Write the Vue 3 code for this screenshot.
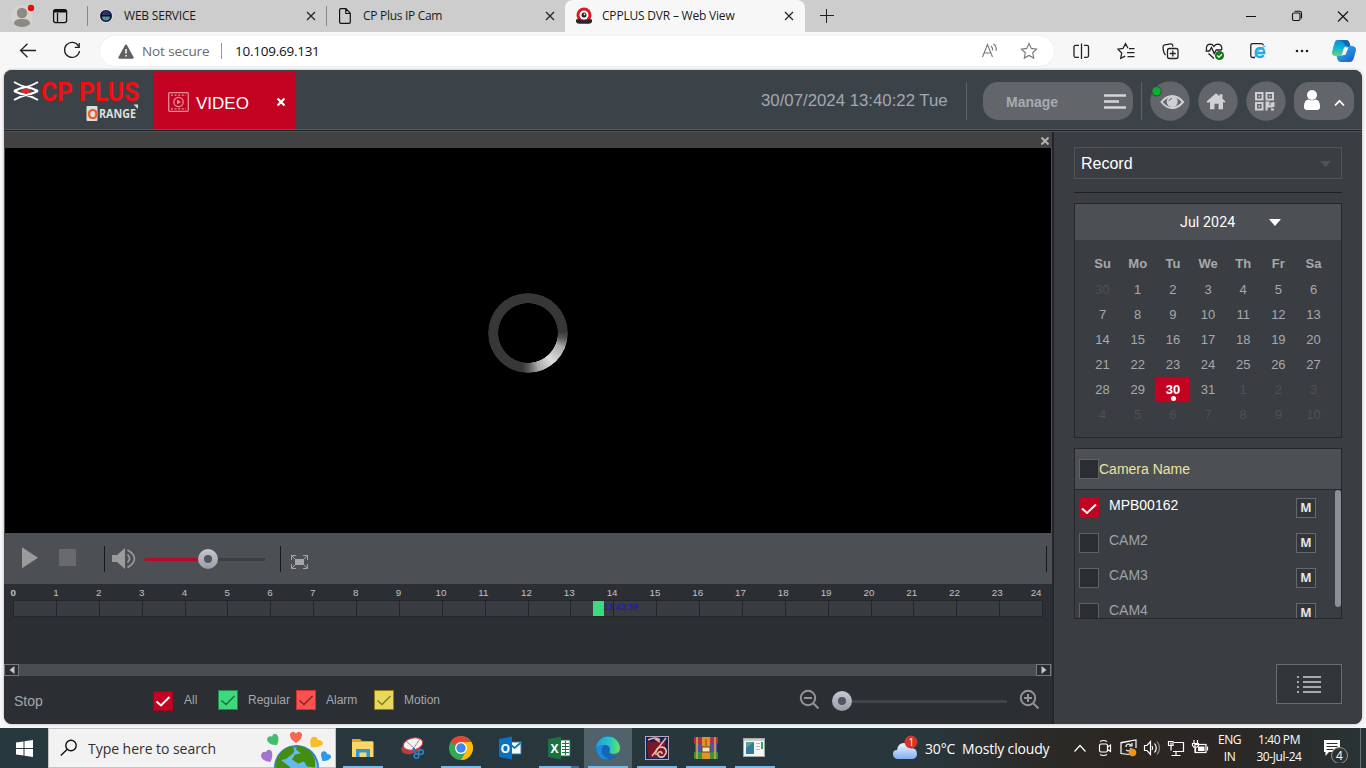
<script setup>
const weekdays = ['Su', 'Mo', 'Tu', 'We', 'Th', 'Fr', 'Sa']
const days = [
  { n: 30, off: true },
  ...Array.from({ length: 31 }, (_, i) => ({ n: i + 1, selected: i === 29 })),
  ...Array.from({ length: 10 }, (_, i) => ({ n: i + 1, off: true }))
]
const hours = Array.from({ length: 25 }, (_, i) => i)
const cameras = [
  { name: 'MPB00162', on: true },
  { name: 'CAM2' },
  { name: 'CAM3' },
  { name: 'CAM4' }
]
const filters = [
  { label: 'All', cls: 'all' },
  { label: 'Regular', cls: 'regular' },
  { label: 'Alarm', cls: 'alarm' },
  { label: 'Motion', cls: 'motion' }
]
</script>

<template>
  <div class="screen">
    <div class="tabs">
      <svg class="avatar" width="44" height="32" viewBox="0 0 44 32">
        <circle cx="22" cy="16" r="11" fill="#d6d3cf" />
        <circle cx="22" cy="13" r="5.2" fill="#8d8985" />
        <path d="M14 24c0-4 3-5 8-5s8 1 8 5c-2 2-5 3-8 3s-6-1-8-3z" fill="#8d8985" />
        <circle cx="31" cy="8" r="3.2" fill="#e01010" />
      </svg>
      <svg width="43" height="32" viewBox="0 0 43 32" fill="none" stroke="#111" stroke-width="1.3">
        <rect x="9.6" y="9.600" width="13" height="13" rx="2" /><path d="M10 11.200h12.500" stroke-width="2.600" /><path d="M13.500 13v9.500" />
      </svg>
      <div class="tab">
        <svg class="fav" width="14" height="14" viewBox="0 0 14 14">
          <circle cx="7" cy="7" r="6.500" fill="#121526" stroke="#eceaf4" />
          <path d="M3 7.500a4 4 0 0 0 8 0z" fill="#4d8faa" /><path d="M3 6a4 4 0 0 1 8 0z" fill="#26356d" />
        </svg>
        <span class="t1">WEB SERVICE</span>
        <svg class="x" width="10" height="10" viewBox="0 0 10 10"><path d="M1 1l8 8M9 1l-8 8" /></svg>
      </div>
      <div class="tab">
        <svg class="fav" width="14" height="16" viewBox="0 0 14 16" fill="none" stroke="#111" stroke-width="1.200">
          <path d="M1.600 2q0-1.300 1.300-1.300h5l4.400 4.600v8.700q0 1.300-1.300 1.300h-8.100q-1.300 0-1.300-1.300zM7.800 1v4.500h4.500" />
        </svg>
        <span class="t2">CP Plus IP Cam</span>
        <svg class="x" width="10" height="10" viewBox="0 0 10 10"><path d="M1 1l8 8M9 1l-8 8" /></svg>
      </div>
      <div class="tab active">
        <svg class="fav cam" width="18" height="18" viewBox="0 0 18 18">
          <circle cx="9" cy="8" r="7.500" fill="#dd1726" />
          <path d="M1 12.500l3-.5q5 3 10 0l3 .5v2.500q-1 1.800-3 1.800H4q-2 0-3-1.800z" fill="#24272b" />
          <circle cx="9" cy="8" r="4.500" fill="#fff" /><circle cx="9" cy="8" r="2.500" fill="#222" /><circle cx="9.500" cy="7.300" r=".9" fill="#fff" />
        </svg>
        <span class="t3">CPPLUS DVR – Web View</span>
        <svg class="x" width="10" height="10" viewBox="0 0 10 10"><path d="M1 1l8 8M9 1l-8 8" /></svg>
      </div>
      <svg class="plus" width="14" height="14" viewBox="0 0 14 14"><path d="M6.500 0v14M0 6.500h14" stroke="#222" /></svg>
      <svg class="wins" width="138" height="32" viewBox="1228 0 138 32" fill="none" stroke="#111" stroke-width="1.100">
        <path d="M1246 16.500h10M1338 11.500l10 10M1348 11.500l-10 10" />
        <rect x="1292.500" y="13" width="7.500" height="7.500" rx="1.500" /><path d="M1294.500 11.200h5q2 0 2 2v5.300" />
      </svg>
    </div>

    <div class="toolbar">
      <svg class="nav" width="100" height="38" viewBox="0 32 100 38" fill="none" stroke="#222" stroke-width="1.300">
        <path d="M36 50.500H21M27.500 43.700l-7 6.800 7 6.800" />
        <path d="M78.600 46.200a7.500 7.500 0 1 0 .9 4.800M79.200 43v4.400h-4.400" />
      </svg>
      <div class="address">
        <svg class="warn" width="16" height="15" viewBox="0 0 16 15">
          <path d="M8 .5q.7 0 1.200.9l6.300 11.600q.6 1.500-.8 1.700H1.300q-1.400-.2-.8-1.700L6.800 1.400Q7.300.5 8 .5z" fill="#606060" />
          <path d="M8 5v4.500M8 11v1.600" stroke="#fff" stroke-width="1.500" />
        </svg>
        <span class="insecure">Not secure</span>
        <i class="sep"></i>
        <span class="url">10.109.69.131</span>
        <svg class="acts" width="70" height="30" viewBox="978 36 70 30" fill="none" stroke="#777" stroke-width="1.100">
          <path d="M982.500 57l5-12.500 5 12.500M984.300 53h6.400M991 46q2 1.800 1.500 4.500M993.500 43.800q3.500 2.800 2.500 7.200" />
          <path d="M1029 43.500l2.300 4.900 5.300.7-3.900 3.700 1 5.300-4.700-2.600-4.700 2.600 1-5.300-3.900-3.700 5.300-.7z" />
        </svg>
      </div>
      <svg class="tools" width="312" height="38" viewBox="1054 32 312 38" fill="none" stroke="#222" stroke-width="1.300">
        <path d="M1081.500 43.500v15.500M1079 45.300h-3.500q-1.500 0-1.500 1.500v9q0 1.500 1.500 1.500h3.500M1084 45.300h3q1.500 0 1.500 1.500v9q0 1.500-1.500 1.500h-3" />
        <path d="M1128 48.200l-2.500-4.500-2.500 4.800-5 .7 3.700 3.800-1 5.400 4.500-2.200M1129 48.700h5.500M1127 52.700h7.500M1127.500 56.600h7" />
        <rect x="1167.500" y="48.500" width="10.500" height="10" rx="2" /><path d="M1172.800 50.500v6M1169.800 53.500h6M1165.500 55q-2.300-2.500-2.500-8 0-1.800 1.700-2.200l6-.9q1.700-.2 2 1.500l.2 1.300" />
        <path d="M1206.500 50q-.8-5.500 3.500-5.800 2.500 0 4 2.200 1.500-2.200 4-2.200 4.500.4 3.700 5.800M1205.500 51h4l2-3.500 2.700 6 2-3.500h5.500M1208.500 53.500l5.500 5" />
        <circle cx="1219.500" cy="55.500" r="4.600" fill="#16791b" stroke="none" /><path d="M1217.200 55.500l1.700 1.700 3-3" stroke="#fff" />
        <path d="M1255 57.500h-2.500q-1.700 0-1.700-1.700v-10.500q0-1.600 1.700-1.600h8.500q2 0 2.500 1.500" />
        <path d="M1263.800 55.200q-1.700 2-4.100 1.800-3.900-.2-4-4.500.3-4.300 4.400-4.500 4.300 0 4.200 5h-7.300" stroke="#27aae1" stroke-width="2.300" /><path d="M1255 57q3-8.500 10.500-11" stroke="#27aae1" stroke-width="1" />
        <g fill="#222" stroke="none"><circle cx="1297" cy="51" r="1.300" /><circle cx="1302" cy="51" r="1.300" /><circle cx="1307" cy="51" r="1.300" /></g>
        <defs>
          <linearGradient id="cpa" x1="0" y1="0" x2="0" y2="1"><stop offset="0" stop-color="#118bd2" /><stop offset=".5" stop-color="#15b3d5" /><stop offset="1" stop-color="#6bd36c" /></linearGradient>
          <linearGradient id="cpb" x1="0" y1="0" x2="1" y2="1"><stop offset="0" stop-color="#30c4f0" /><stop offset="1" stop-color="#1a50cf" /></linearGradient>
        </defs>
        <g stroke="none">
          <path d="M1337 40h9q2.500 0 3.500 3l1 3.500h-4q-2 0-2.700 2l-2.300 7.500h-5.500q-4.500 0-4-4 1.200-5 2.500-9 1-3 2.500-3z" fill="url(#cpa)" />
          <path d="M1347 46h4.500q4.500 0 4.500 4-1.200 5-2.700 9.500-1 2.500-3.500 2.500h-9q-2.500 0-3.500-3l-.7-3h4.200q2 0 2.700-2z" fill="url(#cpb)" />
          <path d="M1337 40h9q2.500 0 3.500 3l1 3.500h-4l-3-3.500q-1-3-6.500-3z" fill="#1464b8" />
          <path d="M1345.500 47.500h3l-3.200 7.500h-2.800z" fill="#f7f7f7" />
        </g>
      </svg>
    </div>

    <div class="app">
      <header class="head">
        <svg class="logo" width="150" height="59" viewBox="4 70 150 59">
          <g fill="none" stroke="#fff" stroke-width="2"><path d="M14 82q7 4 12 5 6 1 12 4M38 82q-7 4-12 5-6 1-12 4M14 91q6 3 12 4 6 1.500 12 5M38 91q-6 3-12 4-6 1.500-12 5" /></g>
          <ellipse cx="26" cy="91" rx="4.500" ry="2.300" fill="#e22" />
          <text x="41" y="100.500" class="brand" textLength="98" lengthAdjust="spacingAndGlyphs">CP PLUS</text>
          <rect x="86.500" y="106" width="11" height="15" rx="1" fill="#ddd" />
          <text x="87.300" y="118.500" class="o">O</text>
          <text x="99" y="118" class="range" textLength="37" lengthAdjust="spacingAndGlyphs">RANGE</text>
          <path d="M133.500 104.500h4.500v4.500z" fill="#ddd" />
        </svg>
        <div class="video-tab">
          <svg width="21" height="20" viewBox="0 0 21 20" fill="none" stroke="#e68d9a">
            <rect x=".7" y=".7" width="19.600" height="18.600" rx="1" stroke-width="1.300" />
            <path d="M3 3.200h15M3 16.800h15" stroke-dasharray="2 1.600" stroke-width="1.300" /><circle cx="10.500" cy="10" r="4.700" stroke-width="1.300" /><path d="M9 7.500v5l4-2.500z" fill="#e68d9a" stroke="none" />
          </svg>
          <span>VIDEO</span>
          <svg class="vx" width="8" height="8" viewBox="0 0 8 8"><path d="M.5.5l7 7M7.500.5l-7 7" stroke="#fff" stroke-width="2.200" /></svg>
        </div>
        <span class="clock">30/07/2024 13:40:22 Tue</span>
        <i class="hsep"></i>
        <div class="manage"><span>Manage</span>
          <svg width="22" height="15" viewBox="0 0 22 15"><path d="M0 1.500h22M0 7.500h15M0 13.500h22" stroke="#d3d5d8" stroke-width="2.600" /></svg>
        </div>
        <i class="hsep second"></i>
        <svg class="round" width="212" height="59" viewBox="1144 70 212 59">
          <g fill="#62656a"><circle cx="1170" cy="101" r="19.700" /><circle cx="1218" cy="101" r="19.700" /><circle cx="1266" cy="101" r="19.700" /><rect x="1294" y="82" width="60" height="38" rx="15" /></g>
          <circle cx="1156.600" cy="91.300" r="5.200" fill="#3c4549" /><circle cx="1156.600" cy="91.300" r="4.200" fill="#05b22b" />
          <path d="M1161.500 102q4.800-6 10.700-6t10.800 6q-4.900 6-10.800 6t-10.700-6z" fill="none" stroke="#cfd1d4" stroke-width="2" />
          <circle cx="1172.200" cy="101.500" r="5.500" fill="#cfd1d4" /><path d="M1169 101q.5-2.500 3-2.500" fill="none" stroke="#62656a" />
          <path d="M1206.500 101.500l9.500-8.200 3.500 3v-2h3v4.500l3 2.700-1.300 1.200-1.200-1v7.500h-4.500v-5.500h-4v5.500h-4.500v-7.500l-2 1.300z" fill="#cfd1d4" />
          <g fill="none" stroke="#cfd1d4" stroke-width="2"><rect x="1256" y="93" width="6.500" height="6.500" /><rect x="1266.500" y="93" width="6.500" height="6.500" /><rect x="1256" y="103" width="6.500" height="6.500" /><path d="M1266.500 110.500v-8h2v4h3v-4M1271 109.500h3M1273.500 102v5" /></g>
          <g fill="#cfd1d4"><rect x="1258.500" y="95.500" width="1.500" height="1.500" /><rect x="1269" y="95.500" width="1.500" height="1.500" /><rect x="1258.500" y="105.500" width="1.500" height="1.500" /></g>
          <circle cx="1312" cy="95" r="5" fill="#fff" /><path d="M1304 107q0-7.500 4.500-7.500 3.500 1.700 7 0 4.500 0 4.500 7.500 0 3-3 3h-10q-3 0-3-3z" fill="#fff" />
          <path d="M1335 105.500l4.500-4.700 4.500 4.700" fill="none" stroke="#fff" stroke-width="1.700" />
        </svg>
      </header>

      <div class="body">
        <main class="left">
          <div class="strip"><svg width="8" height="8" viewBox="0 0 8 8"><path d="M.5.5l7 7M7.500.5l-7 7" stroke="#b4b4b4" stroke-width="2" /></svg></div>
          <div class="video"><div class="spinner"></div></div>
          <div class="controls">
            <svg width="1048" height="51" viewBox="4 533 1048 51">
              <defs><linearGradient id="knob" x1="0" y1="0" x2="0" y2="1"><stop offset="0" stop-color="#c5c8d0" /><stop offset="1" stop-color="#9a9da8" /></linearGradient></defs>
              <path d="M22 547.300v21l16-10.500z" fill="#9b9b9b" /><rect x="59" y="549" width="17" height="17" fill="#686a6c" />
              <path d="M104.500 546v26M280.500 546v26M1046.500 546v26" stroke="#16191c" />
              <path d="M112 555h5l8-7v21l-8-7h-5z" fill="#9b9b9b" />
              <path d="M127.500 554.500q4 4 0 8M127.500 550q14 8.500 0 17.500" fill="none" stroke="#9b9b9b" stroke-width="1.600" />
              <path d="M146 559.500h57" stroke="#b60c2b" stroke-width="3" stroke-linecap="round" /><path d="M216 559.500h49" stroke="#3c3e41" stroke-width="3" />
              <circle cx="208" cy="559" r="10" fill="url(#knob)" /><circle cx="208" cy="559" r="4" fill="#52565e" />
              <g stroke="#a4a6a8" fill="none"><path d="M291.500 560v-4.500h4.500M303 555.500h4.500v4.500M307.500 564v4.500h-4.500M296 568.500h-4.500v-4.500M292 556l4 4M307 556l-4 4M307 568l-4-4M292 568l4-4" /></g><rect x="295" y="559" width="9" height="6" fill="#a4a6a8" />
            </svg>
          </div>
          <div class="timeline">
            <div class="hours"><span v-for="h in hours" :key="h" :class="{ wide: h > 9, last: h === 24 }">{{ h }}</span></div>
            <div class="track"><i v-for="h in 24" :key="h"></i><b class="clip"></b><span class="stamp">13:43:39</span></div>
          </div>
          <div class="scroll"><i><svg width="6" height="8" viewBox="0 0 6 8"><path d="M5.500 0v8L.5 4z" fill="#c2c5c8" /></svg></i><i><svg width="6" height="8" viewBox="0 0 6 8"><path d="M.5 0v8l5-4z" fill="#c2c5c8" /></svg></i></div>
          <div class="foot">
            <span class="stop">Stop</span>
            <label v-for="f in filters" :key="f.label" :class="f.cls">
              <svg width="20" height="20" viewBox="1 1 18 18"><path d="M3.500 10.500l4.500 4 8.500-8.500" /></svg><span>{{ f.label }}</span>
            </label>
            <svg class="zoomer" width="244" height="48" viewBox="798 676 244 48" fill="none" stroke="#929496" stroke-width="2">
              <circle cx="808" cy="698" r="7.200" /><path d="M813.500 703.500l5 5M804 698h8" /><path d="M850 701.500h157" stroke="#414447" stroke-width="3" />
              <circle cx="842" cy="701" r="10" fill="url(#knob)" stroke="none" /><circle cx="842" cy="701" r="4" fill="#52565e" stroke="none" />
              <circle cx="1028" cy="698" r="7.200" /><path d="M1033.500 703.500l5 5M1024 698h8M1028 694v8" />
            </svg>
          </div>
        </main>

        <aside class="right">
          <div class="select"><span>Record</span><svg width="11" height="7" viewBox="0 0 11 7"><path d="M0 0h11L5.500 6.500z" fill="#505356" /></svg></div>
          <div class="rule"></div>
          <div class="calendar">
            <div class="month"><span>Jul 2024</span><svg width="12" height="7" viewBox="0 0 12 7"><path d="M0 0h12L6 7z" fill="#fff" /></svg></div>
            <div class="grid week"><span v-for="w in weekdays" :key="w">{{ w }}</span></div>
            <div class="grid days"><span v-for="(d, i) in days" :key="i" :class="{ off: d.off, selected: d.selected }">{{ d.n }}</span></div>
          </div>
          <div class="cams">
            <div class="camhead"><i class="box"></i><span>Camera Name</span></div>
            <div class="camlist">
              <div v-for="c in cameras" :key="c.name" class="cam-row" :class="{ on: c.on }">
                <i class="box"><svg v-if="c.on" width="18" height="18" viewBox="1 1 18 18"><path d="M3 10.500l5 4.500 9-8.500" fill="none" stroke="#fff" stroke-width="2" /></svg></i>
                <span>{{ c.name }}</span><b>M</b>
              </div>
              <i class="thumb"></i>
            </div>
          </div>
          <div class="listbtn"><svg width="24" height="18" viewBox="0 0 24 18"><path d="M0 2h2M0 7h2M0 12h2M0 17h2M6 2h18M6 7h18M6 12h18M6 17h18" stroke="#a7aaac" stroke-width="2" /></svg></div>
        </aside>
      </div>
    </div>

    <footer class="taskbar">
      <div class="start"><svg width="17" height="17" viewBox="0 0 17 17"><path d="M0 2.500l7.500-1V8H0zM8.500 1.300L17 0v8H8.500zM0 9h7.500v6.500l-7.500-1zM8.500 9H17v8l-8.500-1.300z" fill="#fff" /></svg></div>
      <div class="search">
        <svg class="mag" width="18" height="18" viewBox="0 0 18 18" fill="none" stroke="#111" stroke-width="1.400"><circle cx="11" cy="6.500" r="5.200" /><path d="M7.300 10.200L.8 16.500" /></svg>
        <span>Type here to search</span>
        <svg class="earth" width="74" height="38" viewBox="260 729 74 38">
          <circle cx="296.500" cy="766.500" r="22.500" fill="#3485cc" /><circle cx="296.500" cy="767.500" r="21" fill="#68b8ed" />
          <path d="M277 758q5-11 14-13l3 3q1 4-3 6l-5 4-5 1 5 4 4 3v3h-14q-1-6 1-11zM297 744.500q13 1 18 14v8l-8-1-3-5-6 2-6-4 3-5 6-1-5-4z" fill="#438e12" />
          <path d="M296 742q-7-4.500-6-9 3-4 6-.5 3-3.500 6 .5 1 4.500-6 9z" fill="#f76751" />
          <path d="M277 744q-8 .5-10-5 .5-5 5-3.500 1-4 5-2 3 4 0 10.500z" fill="#43be70" /><path d="M311 746q-2-8 1.500-10 5-1 5 3 5-.5 5.500 4-4 4-12 3z" fill="#f8bd29" /><path d="M270.500 761q-9-1-9.500-6 .5-5 5-4 2-4 5.500-1 2 4-1 11z" fill="#a572ce" /><path d="M322.500 760q-3-8 0-9.500 4-1 4.500 2.500 4.500 0 4 3.500-3 4-8.500 3.500z" fill="#3097e4" />
        </svg>
      </div>
      <svg class="apps" width="440" height="40" viewBox="337 728 440 40">
        <defs><linearGradient id="edge" x1="0" y1="0" x2="1" y2="0"><stop offset="0" stop-color="#249bdc" /><stop offset=".55" stop-color="#24c2c7" /><stop offset="1" stop-color="#66e85a" /></linearGradient></defs>
        <rect x="584" y="728" width="48" height="40" fill="#52626a" />
        <path d="M343 767h40M441 767h40M539 767h32M588 767h40M637 767h40M686 767h40M735 767h40" stroke="#76b9ed" stroke-width="2" /><path d="M571 767h8" stroke="#466b91" stroke-width="2" />
        <path d="M352 739h8l2 2h11v16h-21z" fill="#e8a221" /><path d="M352 742h21.500v15H352z" fill="#fbd768" /><path d="M356 749h14v8h-3.500v-4.500h-7v4.500H356z" fill="#3395d5" />
        <ellipse cx="411" cy="748" rx="10" ry="6" fill="#b33d42" transform="rotate(-14 411 748)" /><ellipse cx="413" cy="744" rx="10" ry="6" fill="#f2f2f2" stroke="#c43b3f" transform="rotate(-14 413 744)" /><path d="M406 741l9 8M420 739l-7 10" stroke="#777" stroke-width=".8" /><path d="M413 748l3 5" stroke="#2176b8" stroke-width="2" /><g fill="none" stroke="#278bd0" stroke-width="1.500"><circle cx="416.500" cy="756" r="2.300" /><circle cx="421" cy="752" r="2.300" /></g>
        <circle cx="461" cy="748" r="12" fill="#35a854" /><path d="M461 748L450.600 742a12 12 0 0 1 20.800 0z" fill="#ea4335" /><path d="M461 742h10.400A12 12 0 0 1 461 760l5.200-9z" fill="#fbbc05" /><circle cx="461" cy="748" r="6" fill="#fff" /><circle cx="461" cy="748" r="4.700" fill="#4285f4" />
        <rect x="508" y="742" width="13" height="12" fill="#fff" stroke="#137cc5" /><path d="M510 744l4.500 4 6-5" fill="none" stroke="#167bc2" stroke-width="2" /><path d="M499 739l13-2.500v23l-13-2.500z" fill="#0873c4" /><text x="500.500" y="752.500" class="letter">O</text>
        <rect x="560" y="740" width="10" height="16" fill="#fff" stroke="#1b7544" /><path d="M562 743.500h7M562 746.500h7M562 749.500h7M562 752.500h7M565.500 741v14" stroke="#1b7544" /><path d="M548 739l13-2.500v23l-13-2.500z" fill="#1b7142" /><text x="550.500" y="752.500" class="letter">X</text>
        <circle cx="608" cy="748" r="12" fill="#1765b5" /><path d="M596 749a12 12 0 0 1 24-1q0 6-7 6-5 0-3-4 0-5-5-5-6 0-9 4z" fill="url(#edge)" /><path d="M603 746q-5 9 6 13-9 3-13-9 3-5 9-5z" fill="#1d8ade" /><path d="M610 750q-2 4 3 4 4 0 6-1l-1 2q-4 1.500-7 .5-3-1.500-1-5.500z" fill="#52626a" />
        <rect x="645.500" y="736.500" width="23" height="23" fill="#14225f" stroke="#b8a7b6" /><path d="M647 742h18v16h-17z" fill="#7c1725" /><path d="M648 740q8-4 12 0M666 738l-14 18M655 739l5 3" stroke="#e1b8b7" stroke-width="1.600" fill="none" /><path d="M656 755q-1-8 6-8 5 1 4 6-2 5-6 4-4-2-1-5 3-1 3 2" fill="none" stroke="#e8c5b3" stroke-width="1.600" />
        <rect x="694" y="737" width="24" height="7" rx="1" fill="#b72d4e" /><rect x="695" y="744" width="22" height="8" fill="#4d55ab" /><rect x="694" y="752" width="24" height="7" rx="1" fill="#3b9142" /><path d="M697 737v22M715 737v22" stroke="#d7ad3e" stroke-width="1.500" /><path d="M702 737h8v22h-8z" fill="#e49125" /><rect x="702" y="747" width="8" height="5" fill="#f3e5b4" stroke="#6b4525" /><path d="M706 739v7" stroke="#77501d" />
        <rect x="743.500" y="738.500" width="21" height="18" fill="#f4f6f6" stroke="#a5a9aa" /><path d="M744 740h20" stroke="#ccc" stroke-width="2" /><rect x="746" y="742" width="8" height="12" fill="#5aa294" /><path d="M746 748l8-6v12h-8z" fill="#3778a3" /><path d="M756 743.500h4M756 746.500h4M756 749.500h4" stroke="#bbb" /><path d="M762 742v7" stroke="#30a967" stroke-width="2" />
      </svg>
      <svg class="cloud" width="30" height="30" viewBox="890 733 30 30"><defs><linearGradient id="cl" x1="0" y1="0" x2="0" y2="1"><stop offset="0" stop-color="#eff5ff" /><stop offset="1" stop-color="#80aff1" /></linearGradient></defs><path d="M897 759q-4-1-4-5 0-4 4-4 1-7 7-7 6 0 7 5 6 0 6 6 0 4-4 5z" fill="url(#cl)" /><circle cx="911" cy="742" r="6.500" fill="#d43527" /><text x="908.400" y="745.700" class="badge one">1</text></svg>
      <span class="weather">30°C&nbsp; Mostly cloudy</span>
      <svg class="tray" width="144" height="40" viewBox="1070 728 144 40" fill="none" stroke="#fff" stroke-width="1.200">
        <path d="M1074.500 751.500l5.500-6 5.500 6" /><rect x="1099.500" y="744" width="8" height="8" rx="1.500" /><path d="M1107.500 747l3-2v6.500l-3-2M1100 741.500q3.500-2 7 0M1100 754.500q3.500 2 7 0" />
        <path d="M1129 754.500l-8-1v-11l15-2.500v8M1131 741l-10 2v10M1126 747q0-3 3-3l2 1M1132 743v3h-3M1131 748q0 3-3 3l-2-1" /><circle cx="1132.500" cy="752.500" r="3.800" fill="#f7930a" stroke="none" />
        <path d="M1144.500 745.500h2.500l3.500-4v13l-3.500-4h-2.500zM1152 746q1.500 2 0 4M1154.500 743.500q3.500 4.500 0 9" /><path d="M1157 741.500q5 6.500 0 13" stroke="#8c8c8c" />
        <path d="M1174 742.500h9.500v9H1173M1176 751.500v4M1171.500 755.500h9M1171 742.500v8M1168.500 741.500h4.500v4h-4.500z" />
        <rect x="1195" y="744.500" width="11" height="8" /><path d="M1198 746.500h6.500v4.500h-6.500z" fill="#fff" stroke="none" /><path d="M1207.500 746.500v4M1194 740v3M1197.500 740v3M1192.500 743.500h6v2q-1 2-3 2t-3-2zM1195.500 748v4" />
      </svg>
      <div class="pair lang"><span>ENG</span><span>IN</span></div>
      <div class="pair time"><span>1:40 PM</span><span>30-Jul-24</span></div>
      <svg class="notify" width="28" height="30" viewBox="1323 733 28 30"><path d="M1325 740h16v12h-11l-3.500 4v-4H1325z" fill="#fff" /><path d="M1327.500 743.500h11M1327.500 746.500h11M1327.500 749.500h7" stroke="#292e2d" /><circle cx="1340.500" cy="755.500" r="8" fill="#30322f" stroke="#999" /><text x="1337" y="760" class="badge">4</text></svg>
      <i class="desk"></i>
    </footer>
  </div>
</template>

<style>
body { overflow: hidden; }
</style>
<style scoped>
* { box-sizing: border-box; }
svg { display: block; flex: none; }
i { font-style: normal; }
span { white-space: nowrap; }
.screen { width: 1366px; height: 768px; background: #f7f6f8; display: flex; flex-direction: column; font-family: "Liberation Sans", sans-serif; overflow: hidden; }
.tabs { height: 32px; background: #cdcdcd; display: flex; align-items: center; font: 12px "Open Sans", "Noto Sans", sans-serif; color: #1a1a1a; flex: none; }
.tab { width: 239px; height: 32px; display: flex; align-items: center; padding-left: 12px; position: relative; }
.tab:not(.active)::before { content: ""; position: absolute; left: 0; top: 6px; width: 1px; height: 20px; background: #888; }
.tab span { margin-left: 11px; flex: 1; padding-bottom: 1px; }
.tab .t1 { letter-spacing: -.2px; }
.tab .t2 { letter-spacing: -.3px; }
.tab .t3 { letter-spacing: -.2px; margin-left: 9px; }
.tab .x { margin-right: 10px; fill: none; stroke: #222; stroke-width: 1.2; }
.tab.active { width: 240px; background: #f7f7f7; border-radius: 8px 8px 0 0; padding-left: 10px; }
.tab.active .x { margin-right: 11px; }
.plus { margin-left: 15px; }
.wins { margin-left: auto; }
.toolbar { height: 38px; display: flex; background: #f7f7f7; align-items: center; flex: none; }
.address { width: 954px; height: 30px; border-radius: 15px; background: #fff; display: flex; align-items: center; box-shadow: 0 0 2px #e4e4e4; font: 13.5px "Open Sans", sans-serif; }
.warn { margin-left: 18px; }
.insecure { width: 79px; margin-left: 8px; letter-spacing: -.1px; color: #6a6a6a; }
.sep { width: 1px; height: 16px; background: #999; }
.url { margin-left: 13px; flex: 1; letter-spacing: -.25px; color: #111; }
.acts { margin-right: 6px; }
.app { width: 1358px; height: 654px; margin-left: 4px; border-radius: 8px; overflow: hidden; background: #3a3d41; display: flex; flex-direction: column; flex: none; box-shadow: 0 0 3px #aaa; }
.head { height: 62px; background: #3c4348; display: flex; border-bottom: 1px solid #4c4f53; box-shadow: inset 0 -1px #202429, inset 0 -2px #575a5e; }
.brand { font: bold 26px Roboto, sans-serif; fill: #f80c12; }
.o { font: bold 14px "Open Sans", sans-serif; fill: #f05a21; }
.range { font: bold 12px "Open Sans", sans-serif; fill: #ddd; }
.video-tab { width: 141px; height: 57px; margin-top: 2px; background: #c30321; display: flex; align-items: center; padding: 4px 0 0 14px; color: #fff; font-size: 17px; }
.video-tab > svg:first-child { margin-top: -2px; }
.video-tab span { width: 80px; padding: 2px 0 0 7px; }
.video-tab > .vx { margin: -1px 0 0 8px; }
.clock { width: 206px; margin: 22px 0 0 466px; font-size: 16.8px; line-height: 18px; color: #a2a8b3; }
.hsep { width: 1px; height: 38px; margin-top: 12px; background: #5e6368; margin-left: -1px; }
.manage { width: 150px; height: 38px; margin: 12px 0 0 16px; border-radius: 15px; background: #62656a; display: flex; align-items: center; padding: 0 7px 0 23px; justify-content: space-between; font-weight: bold; font-size: 14px; color: #a6abb4; }
.manage span { padding-top: 2px; }
.hsep.second { margin-left: 8px; }
.round { margin-left: 2px; }
.body { display: flex; height: 592px; }
.left { width: 1050px; background: #2b2e33; border-right: 2px solid #222529; }
.strip { height: 16px; background: #424242; display: flex; justify-content: flex-end; align-items: center; padding: 1px 3px 0 0; }
.video { height: 385px; background: #000; border: solid #505358; border-width: 0 1px; padding: 145px 0 0 483px; }
.spinner { width: 80px; height: 80px; border-radius: 50%; background: conic-gradient(#373737 0 88deg, #555 98deg, #aaa 112deg, #ddd 140deg, #aaa 163deg, #555 180deg, #373737 190deg); -webkit-mask: radial-gradient(circle, transparent 29.5px, #000 30px); mask: radial-gradient(circle, transparent 29.5px, #000 30px); }
.controls { height: 51px; background: #4c4f53; }
.timeline { height: 80px; padding-top: 2px; }
.hours { display: grid; grid-template-columns: repeat(25, 42.8px); width: 1048px; padding-left: 6.5px; height: 14px; font-size: 9.8px; line-height: 13px; color: #c0c3c6; overflow: hidden; }
.hours .wide { margin-left: -3px; }
.hours .last { margin-left: -7px; }
.hours span:first-child { font-weight: bold; }
.track { width: 1030px; height: 17px; margin-left: 9px; display: grid; grid-template-columns: repeat(24, 1fr); border: 1px solid #23262a; border-left: 0; background: #383b3f; position: relative; }
.track i { border-left: 1px solid #222529; }
.clip { position: absolute; left: 580px; top: 0; width: 11px; height: 15px; background: #3fd97d; }
.stamp { position: absolute; left: 590px; top: 0; font-size: 9px; line-height: 12px; color: #1712c7; }
.scroll { height: 12px; background: #4a4d51; display: flex; justify-content: space-between; }
.scroll i { width: 15px; height: 12px; border: 1px solid #777b80; background: #292c31; display: grid; place-items: center; }
.scroll i:last-child { margin-right: 1px; }
.foot { height: 48px; display: flex; color: #a3a7ae; font-size: 12px; }
.stop { width: 139px; padding: 16px 0 0 10px; font-size: 14px; line-height: 18px; }
.foot label { display: flex; padding-top: 14px; width: 65px; }
.foot label svg { background: #3fd97d; border: 1px solid #218b4b; margin-right: 10px; fill: none; stroke: #1e6d3c; stroke-width: 1.5; }
.foot label span { line-height: 20px; }
.foot .all { margin-left: 10px; }
.foot .all svg { margin: 1px 11px 0 0; background: #c30321; border-color: #a5021d; stroke: #fff; stroke-width: 2; }
.foot .regular { width: 78px; }
.foot .alarm { width: 78px; }
.foot .alarm svg { background: #fb5050; border-color: #d12f2f; stroke: #8e2020; }
.foot .motion { width: 90px; }
.foot .motion svg { background: #e7d95c; border-color: #9b7910; stroke: #8a7a22; }
.zoomer { margin-left: 334px; }
.right { width: 308px; padding: 15px 20px 0; background: #3a3d41; }
.select { height: 32px; border: 1px solid #505358; display: flex; align-items: center; justify-content: space-between; padding: 1px 10px 0 6px; color: #fff; font-size: 16px; }
.select span { padding-top: 1px; }
.select svg { margin-top: 1px; }
.rule { height: 1px; background: #1d1f22; margin-top: 13px; }
.calendar { margin-top: 10px; height: 235px; border: 1px solid #25272b; }
.month { height: 36px; background: #4c4f53; display: flex; align-items: center; color: #fff; font-size: 14px; padding-left: 105px; }
.month span { font: 14.2px Roboto, sans-serif; width: 89px; letter-spacing: .1px; }
.grid { display: grid; grid-template-columns: repeat(7, 35.17px); text-align: center; margin-left: 10px; color: #a6a9ae; font-size: 13px; }
.week { font-weight: bold; margin-top: 13px; height: 24px; line-height: 22px; }
.days { grid-auto-rows: 25px; line-height: 26px; }
.days .off { color: #4e5155; }
.days .selected { background: #c30321; color: #fff; font-weight: bold; position: relative; box-shadow: 0 0 1px #c30321; }
.selected::after { content: ""; position: absolute; left: 16px; top: 19px; width: 5px; height: 5px; border-radius: 50%; background: #fff; }
.cams { margin-top: 10px; height: 171px; border: 1px solid #25272b; }
.camhead { height: 41px; background: #4c4f53; border-bottom: 1px solid #25272b; display: flex; align-items: center; padding-left: 4px; font-size: 14px; color: #ebe5a0; }
.box { width: 20px; height: 20px; border: 1px solid #5e6165; background: #2a2d31; flex: none; }
.camlist { height: 128px; overflow: hidden; position: relative; padding-top: 8px; }
.cam-row { height: 35px; display: flex; padding-left: 4px; color: #9fa3aa; font-size: 14px; }
.cam-row span { margin-left: 10px; line-height: 15px; width: 187px; }
.cam-row.on { color: #fff; }
.cam-row.on .box { background: #c30321; border-color: #c30321; }
.cam-row b { width: 20px; height: 20px; border: 1px solid #65686c; background: #32353a; color: #e2e5e8; font: bold 12px/17px "Open Sans", sans-serif; text-align: center; }
.thumb { position: absolute; right: 0; top: 0; width: 6px; height: 117px; border-radius: 3px; background: #8b8f96; }
.listbtn { width: 66px; height: 40px; margin: 45px 0 0 202px; background: #31363a; border: 1px solid #696c70; display: grid; place-items: center; }
.taskbar { height: 40px; margin-top: 4px; display: flex; align-items: center; background: linear-gradient(90deg, #27383f 0, #28373c 55%, #29373d 68%, #2b2b29 75%, #2b2622 82%, #2b2724 90%, #293335 100%); color: #fff; font: 14px "Open Sans", sans-serif; flex: none; }
.start { width: 48px; display: grid; place-items: center; }
.search { width: 288px; height: 40px; background: #f2f2f2; border: 1px solid #c3c3c3; color: #303030; display: flex; align-items: center; }
.mag { margin-left: 11px; margin-top: -1px; }
.search span { width: 172px; margin-left: 10px; letter-spacing: -.04px; }
.earth { margin-top: 1px; }
.apps { margin-left: 1px; }
.letter { font: bold 12px "Open Sans", sans-serif; fill: #fff; }
.badge { font: 12px "Open Sans", sans-serif; fill: #fff; }
.badge.one { font-size: 10px; }
.cloud { margin-left: 113px; }
.weather { width: 145px; margin-left: 5px; letter-spacing: -.18px; }
.pair { display: flex; flex-direction: column; align-items: center; font-size: 12px; line-height: 17px; letter-spacing: -.4px; padding-bottom: 1px; }
.lang { width: 31px; }
.time { width: 56px; margin-left: 6px; }
.notify { margin-left: 15px; }
.desk { width: 1px; height: 40px; background: #687174; margin-left: 10px; }
</style>
